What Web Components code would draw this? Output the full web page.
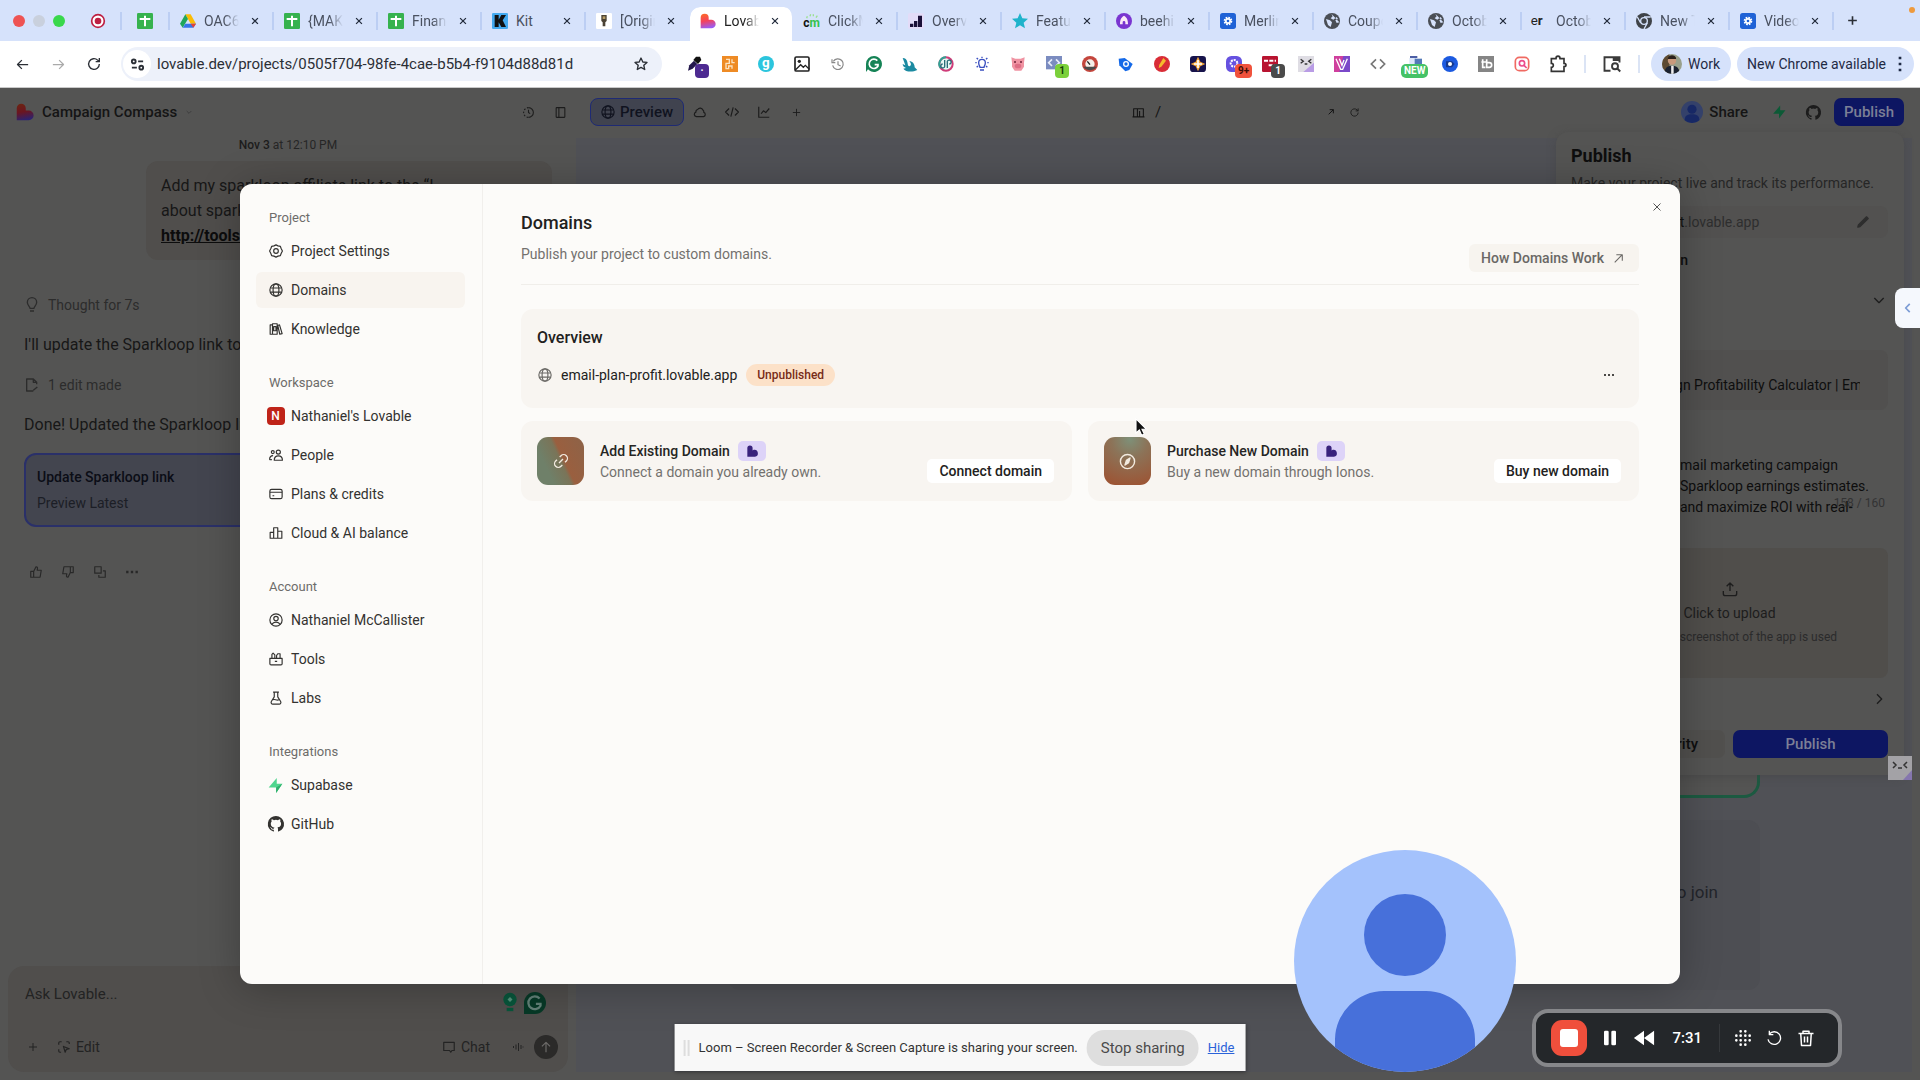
<!DOCTYPE html>
<html lang="en">
<head>
<meta charset="utf-8">
<title>Campaign Compass</title>
<style>
html, body {
  margin: 0;
  height: 100%;
}
body {
  display: grid;
  grid-template-rows: auto 1fr;
  overflow: hidden;
  font-family: Roboto, "Liberation Sans", sans-serif;
  font-size: 14px;
  background: #545453;
}
</style>
</head>
<body>
<browser-chrome></browser-chrome>
<project-page></project-page>

<script>
// line icons, 24 grid, drawn with the current colour
const lineIcons = {
  close: '<path d="M5 5l14 14M19 5L5 19"/>',
  plus: '<path d="M12 4v16M4 12h16"/>',
  back: '<path d="M21 12H4M11 5l-7 7 7 7"/>',
  forward: '<path d="M3 12h17M13 5l7 7-7 7"/>',
  reload: '<path d="M20 12a8 8 0 1 1-2.5-5.8L20 8.500M20 3v5.500h-5.500"/>',
  tune: '<circle cx="6" cy="7" r="3"/><path d="M13 7h8M3 17h8"/><circle cx="18" cy="17" r="3"/>',
  star: '<path d="M12 3l2.700 6 6.300.6-4.800 4.300 1.400 6.400L12 17l-5.600 3.300 1.400-6.400L3 9.600 9.300 9z"/>',
  chevronDown: '<path d="M5 9l7 7 7-7"/>',
  chevronRight: '<path d="M9 5l7 7-7 7"/>',
  chevronLeft: '<path d="M15 5l-7 7 7 7"/>',
  history: '<path d="M12 3a9 9 0 0 1 0 18"/><path d="M12 3a9 9 0 0 0 0 18" stroke-dasharray="3 3"/><path d="M12 7v5l3 2"/>',
  panel: '<rect x="4" y="3" width="16" height="18" rx="1"/><path d="M9 3v18"/>',
  globe: '<circle cx="12" cy="12" r="10.500"/><ellipse cx="12" cy="12" rx="5" ry="10.500"/><path d="M3 8.500h18M3 15.500h18"/>',
  cloud: '<path d="M6 20a4 4 0 0 1-1-7.800 4 4 0 0 1 3-4.500 5 5 0 0 1 9 1 4 4 0 0 1 1.500 4A3.800 3.800 0 0 1 18 20z"/>',
  code: '<path d="M7 6l-6 6 6 6M17 6l6 6-6 6M14 4l-4 16"/>',
  chart: '<path d="M3 3v18h18M7 15l4-5 4 3 6-7"/>',
  device: '<path d="M1 20h9V5H3v15M10 5h11v15h-8M14 20V9M8 20h15"/>',
  arrowOut: '<path d="M5 19L19 5M8 5h11v11"/>',
  gear: '<path d="M12 1.500l3.500 1.700 4 .8 1.300 3.800L23 12l-2.200 4.200-1.300 3.800-4 .8-3.500 1.700-3.500-1.700-4-.8-1.300-3.800L1 12l2.200-4.200L4.500 4l4-.8z"/><circle cx="12" cy="12" r="4"/>',
  books: '<path d="M2 5h4v16H2zM6 3h8v18H6zM8 8h4v7H8zM15 6l3-1 4.500 15-4 1z"/>',
  people: '<circle cx="6.500" cy="7" r="2.500"/><circle cx="16" cy="7" r="3.500"/><path d="M9 21c0-5 3-7.500 7-7.500s7 2.500 7 7.500zM1 20c0-4 2-7 6-7"/><path d="M1 20h4"/>',
  card: '<rect x="1.500" y="4" width="21" height="16" rx="3"/><path d="M1.500 9h21M6 15h3"/>',
  bars: '<path d="M2 21V11h6v10zM8 21V3h7v18zM15 21V9h7v12z"/>',
  user: '<circle cx="12" cy="12" r="10.500"/><circle cx="12" cy="9.500" r="3.800"/><path d="M5 19.500c1.500-3 4-4 7-4s5.500 1 7 4"/>',
  toolbox: '<path d="M1.500 11h21v9a2 2 0 0 1-2 2h-17a2 2 0 0 1-2-2zM5 11V4l2-2 3 3v6M13 11V6l2-3h4v8M10 16h4"/>',
  flask: '<path d="M7 2h10M9 2v8l-5 8a3 3 0 0 0 2.500 4.500h11A3 3 0 0 0 20 18l-5-8V2M7 15c3-2 6 2 10 0"/>',
  link: '<path d="M10 6l2-2a5.600 5.600 0 0 1 8 8l-2 2M14 18l-2 2a5.600 5.600 0 0 1-8-8l2-2M9 15l6-6"/>',
  compass: '<circle cx="12" cy="12" r="10"/><path d="M15.500 7l-2 6.500-5 3.500 2-6.500z" fill="currentColor"/>',
  bulb: '<path d="M9 17c0-3-4-4-4-9a7 7 0 0 1 14 0c0 5-4 6-4 9zM9 21h6"/>',
  edit: '<path d="M14 21H4V3h10l5 5v3M14 3v5h5M14 20l6-5"/>',
  thumbUp: '<path d="M3 11h5v10H3zM8 11l4-8c3 0 3 2 2 6h7l-2 12H8"/>',
  thumbDown: '<path d="M21 13h-5V3h5zM16 13l-4 8c-3 0-3-2-2-6H3L5 3h11"/>',
  copy: '<path d="M3 3h11v11H3zM10 17v4h11V10h-4"/>',
  pencil: '<path d="M3 21l4-1L21 6l-3-3L4 17z" fill="currentColor"/>',
  upload: '<path d="M12 15V3M7 8l5-5 5 5M2 15v4c0 2 1 3 3 3h14c2 0 3-1 3-3v-4"/>',
  select: '<path d="M8 3H5a2 2 0 0 0-2 2v3M16 3h3a2 2 0 0 1 2 2v2M3 16v3a2 2 0 0 0 2 2h2M11 11l10 4-5 1-2 5z"/>',
  chat: '<path d="M3 4h18v14h-4l-2 3-2-3H3z"/>',
  wave: '<path d="M3 10v4M8 7v10M13 4v16M18 8v8M22 11v2"/>',
  arrowUp: '<path d="M12 21V4M5 11l7-7 7 7"/>',
  undo: '<path d="M5 6a9.500 9.500 0 1 1-2 8M5 1v6h6"/>',
  trash: '<path d="M2 6h20M8 6V3h8v3M5 6l1 16h12l1-16M10 10v8M14 10v8"/>',
  // a lattice of round dots
  gridDots: '<path stroke-linecap="round" d="M8.500 2v.01M15.500 2v.01M2 8.500v.01M8.500 8.500v.01M15.500 8.500v.01M22 8.500v.01M2 15.500v.01M8.500 15.500v.01M15.500 15.500v.01M22 15.500v.01M8.500 22v.01M15.500 22v.01"/>'
};

// filled and coloured marks, on a 24 grid too
const marks = {
  record: '<circle cx="12" cy="12" r="9.500" fill="#fff" stroke="#bd1f42" stroke-width="2.500"/><circle cx="12" cy="12" r="5" fill="#bd1f42"/>',
  sheets: '<rect width="24" height="24" rx="2" fill="#36b24e"/><path d="M12 4v16M4 9h16" stroke="#fff" stroke-width="3"/>',
  drive: '<path d="M8 2h8l8 14h-8z" fill="#fbbc05"/><path d="M8 2l4 7-8 13-4-6z" fill="#20a65a"/><path d="M8 16h16l-4 6H4z" fill="#3775e8"/><path d="M16 16h8l-4 6z" fill="#e84335"/>',
  kit: '<rect width="24" height="24" rx="2" fill="#43a9ef"/><path d="M4 3h6v7l4-7h7l-5 8 5 10h-7l-4-7v7H4z" fill="#111"/>',
  lamp: '<rect width="24" height="24" rx="2" fill="#fff"/><path d="M8 3h8v9l-2 2v6h-4v-6l-2-2z" fill="#4a4234"/><path d="M10 5h4v4h-4z" fill="#b59c66"/>',
  cm: '<path d="M4 8l1-3M9 5l1-3M14 5V2M18 7l2-3" stroke="#9be08f" stroke-width="2"/><text x="-1" y="21" font-size="18" font-weight="700" fill="#111">c<tspan fill="#35c24d">m</tspan></text>',
  overview: '<rect width="24" height="24" rx="3" fill="#e3dcf8"/><path d="M3 16h5v5H3zM9 12h5v9H9zM15 4h6v17h-6z" fill="#1b1038"/>',
  featured: '<path d="M12 0l3.500 8 8.500.8-6.500 5.700 2 8.500-7.500-4.500L4.500 23l2-8.500L0 8.800 8.500 8z" fill="#1fb3cb"/>',
  beehive: '<circle cx="12" cy="12" r="12" fill="#7a35d0"/><path d="M12 4c5 3 6 7 6 13h-4v-3a2 2 0 0 0-4 0v3H6c0-6 1-10 6-13z" fill="#fbe9f7"/>',
  blueDoc: '<rect width="24" height="24" rx="4" fill="#1f62d6"/><circle cx="12" cy="12" r="5" fill="none" stroke="#fff" stroke-width="3" stroke-dasharray="2.500 1.400"/><circle cx="12" cy="12" r="4.500" fill="#fff"/><circle cx="12" cy="12" r="2" fill="#1f62d6"/>',
  world: '<circle cx="12" cy="12" r="12" fill="#4a4e55"/><path d="M3 9l6 2 3 3-2 7-4-3zM11 1l2 4-3 3 4 2 5-4 2 3-4 2 2 4 4-1" fill="#d6e2fb"/>',
  er: '<text x="-2" y="18" font-size="20" fill="#222">e<tspan font-weight="700">r</tspan></text>',
  chromeMark: '<circle cx="12" cy="12" r="12" fill="#3f4348"/><circle cx="12" cy="12" r="5" fill="#3f4348" stroke="#d6e2fb" stroke-width="2"/><path d="M12 6h10M7 15L2 6M17 15l-5 9" stroke="#d6e2fb" stroke-width="2"/>',
  heart: '<defs><linearGradient id="h" x1=".2" y1="0" x2=".4" y2="1"><stop stop-color="#fd6a27"/><stop offset=".5" stop-color="#f4425c"/><stop offset="1" stop-color="#9a5cf5"/></linearGradient></defs><path d="M1 23V7a6 6 0 0 1 12 0v3h4a6.500 6.500 0 0 1 0 13z" fill="url(#h)"/>',
  heartDim: '<defs><linearGradient id="h" x1=".2" y1="0" x2=".4" y2="1"><stop stop-color="#6b2412"/><stop offset=".5" stop-color="#6b1520"/><stop offset="1" stop-color="#2c2270"/></linearGradient></defs><path d="M1 23V7a6 6 0 0 1 12 0v3h4a6.500 6.500 0 0 1 0 13z" fill="url(#h)"/>',
  heartPlan: '<path d="M4 22V7a4.500 4.500 0 0 1 9 0v4l2-1a5.500 5.500 0 0 1 2 12z" fill="#38227c"/>',
  supabase: '<path d="M14 0v9h9L13 24v-9H1z" fill="#4fd68e"/><path d="M13 15l10-6L13 24z" fill="#2fae6b"/>',
  supabaseDim: '<path d="M14 1v8h9L12 23v-8H2z" fill="#0c5a36"/>',
  github: '<path fill="currentColor" d="M12 0a12 12 0 0 0-4 23.400c.6.100.8-.3.800-.6v-2.200c-3.300.7-4-1.400-4-1.400-.6-1.400-1.400-1.800-1.400-1.800-1-.7.100-.7.100-.7 1.200 0 1.900 1.200 1.900 1.200 1 1.900 2.900 1.300 3.500 1 .1-.8.400-1.300.8-1.600-2.700-.3-5.500-1.300-5.500-6 0-1.200.5-2.300 1.300-3.100-.2-.4-.6-1.600 0-3.200 0 0 1-.3 3.400 1.200a11.500 11.500 0 0 1 6 0c2.300-1.500 3.300-1.200 3.300-1.200.7 1.600.2 2.800.1 3.200.8.800 1.300 1.900 1.300 3.200 0 4.600-2.800 5.600-5.500 5.900.5.400.9 1 .9 2.200v3.300c0 .3.100.7.800.6A12 12 0 0 0 12 0z"/>',
  dots: '<path fill="currentColor" d="M2 10h4v4H2zM10 10h4v4h-4zM18 10h4v4h-4z"/>',
  avatarDim: '<circle cx="12" cy="12" r="12" fill="#34416a"/><circle cx="12" cy="9" r="5" fill="#172865"/><path d="M4 21c0-5 3-6.500 8-6.500s8 1.500 8 6.500a12 12 0 0 1-16 0z" fill="#172865"/>',
  // extensions
  picker: '<path d="M3 22l2-8 7-7 5 5-7 7z" fill="#24184d"/><path d="M11 6l4-5h6l2 5-5 6z" fill="#111"/>',
  orange: '<rect width="24" height="24" fill="#ee8b25"/><path d="M6 5h5v6H6v8h4v-4h5v4M15 5v5h4" stroke="#fbe3c2" stroke-width="2" fill="none"/>',
  gCyan: '<circle cx="12" cy="12" r="12" fill="#2cc5dd"/><text x="6" y="17" font-size="20" font-weight="700" fill="#fff">g</text>',
  image: '<rect x="1.500" y="1.500" width="21" height="21" rx="2" fill="none" stroke="#222" stroke-width="2.500"/><path d="M2 21l8-8 4 4 3-3 6 6" fill="none" stroke="#222" stroke-width="2"/><circle cx="8" cy="8" r="2.500" fill="#222"/>',
  clock: '<path d="M5 8a8 8 0 1 1-1 6M3 5v5h5M12 8v5l4 2" fill="none" stroke="#888" stroke-width="1.800"/>',
  grammarly: '<path d="M12 0a12 12 0 1 1-9 20L0 24V12A12 12 0 0 1 12 0z" fill="#158356"/><path d="M17 7a7 7 0 1 0 1 8v-2h-5" fill="none" stroke="#fff" stroke-width="2.500"/>',
  grammarlyDim: '<path d="M12 0a12 12 0 1 1 0 24H0V12A12 12 0 0 1 12 0z" fill="#073927"/><path d="M17 7a7 7 0 1 0 1 8v-2h-5" fill="none" stroke="#638178" stroke-width="2.500"/>',
  tipDim: '<circle cx="12" cy="9" r="8" fill="#08563b"/><path d="M9 9l3-3 3 3-3 3z" fill="#54907a"/><path d="M8 19h8v4H8z" fill="#08563b"/>',
  squid: '<path d="M1 3c4 0 6 2 7 6l1 5c1 2 3 2 4 0s0-4-2-6c5 0 8 4 8 9l4 4-5 2c-8 1-13 0-16-4l4-1c-3-1-5-3-5-6l4 2z" fill="#1b8aa1"/>',
  ring: '<circle cx="12" cy="12" r="10" fill="#e9f7f4" stroke="#cf3c79" stroke-width="3"/><path d="M12 2a10 10 0 0 0-8 16" fill="none" stroke="#2fa494" stroke-width="3"/><path d="M10 6v8a3 3 0 1 1-3-2M14 18v-8a3 3 0 1 1 3 2" fill="none" stroke="#2a6b78" stroke-width="2"/>',
  idea: '<path d="M9 17c0-2-2-3-2-7a5 5 0 0 1 10 0c0 4-2 5-2 7zM9 21h6M12 1v2M2 10h2M20 10h2M4 3l2 2M20 3l-2 2M4 17l2-2M20 17l-2-2" fill="none" stroke="#3a4fc0" stroke-width="2"/>',
  pig: '<path d="M2 2l6 2h8l6-2-1 8v6l-4 6H7l-4-6v-6z" fill="#f093a2"/><ellipse cx="12" cy="15" rx="5" ry="3.500" fill="#dd6d84"/><path d="M6 9h3M15 9h3" stroke="#6e2338" stroke-width="2"/>',
  codeBlue: '<rect width="24" height="20" fill="#7b8cc0"/><path d="M9 5l-5 5 5 5M15 5l5 5-5 5" fill="none" stroke="#e9edfa" stroke-width="2.500"/>',
  gauge: '<circle cx="12" cy="12" r="12" fill="#c4463d"/><circle cx="12" cy="12" r="7" fill="#f5efe9"/><path d="M2 16h20a12 12 0 0 1-20 0z" fill="#4b4b4b"/><path d="M12 13L8 8" stroke="#222" stroke-width="2"/>',
  tag: '<path d="M1 4l9-1 12 9-5 9-6 2L2 14z" fill="#1469e8"/><circle cx="12" cy="12" r="3.500" fill="#1469e8" stroke="#fff" stroke-width="2"/>',
  redPen: '<circle cx="12" cy="12" r="12" fill="#d92c36"/><path d="M14 3l4 4-7 9-4 2 1-5z" fill="#f5b92c"/>',
  starNavy: '<rect width="24" height="24" rx="5" fill="#17134b"/><path d="M12 1l3.500 7.500L23 12l-7.500 3.500L12 23l-3.500-7.500L1 12l7.500-3.500z" fill="#f2a73b"/><path d="M12 6v12M6 12h12" stroke="#fff" stroke-width="2.500"/>',
  violet: '<rect width="24" height="24" rx="8" fill="#6651e0"/><circle cx="12" cy="11" r="5" fill="none" stroke="#fff" stroke-width="3" stroke-dasharray="3 1.500"/>',
  redBox: '<rect width="24" height="24" rx="2" fill="#b81330"/><path d="M3 7h18M10 14h11" stroke="#fff" stroke-width="3" stroke-dasharray="6 2"/>',
  face: '<rect width="24" height="24" fill="#dfdde4"/><path d="M24 10v14H8z" fill="#b99ce5"/><path d="M4 5l4 3-4 3M20 5l-4 3 4 3M10 12h4" fill="none" stroke="#333" stroke-width="2"/>',
  facePale: '<rect width="24" height="24" fill="#a3a2a6"/><path d="M24 14v10h-9z" fill="#8576ae"/><path d="M5 6l3 3-3 3M19 6l-3 3 3 3M10 12h4" fill="none" stroke="#333" stroke-width="1.500"/>',
  vBox: '<rect width="24" height="24" fill="#cf3f9d"/><path d="M14 0h10v24H8z" fill="#7a48c9"/><path d="M3 4l7 16h3L20 4M8 4l4 10 3-8" fill="none" stroke="#fff" stroke-width="2"/>',
  angle: '<path d="M9 5l-7 7 7 7M15 5l7 7-7 7" fill="none" stroke="#777" stroke-width="2.500"/>',
  cardNew: '<path d="M6 0h11v3H6z" fill="#4d5fa5"/><path d="M5 3h10v9H5z" fill="#dce6fa"/><path d="M13 4h11v8H13z" fill="#5379b8"/>',
  blueEye: '<circle cx="12" cy="12" r="12" fill="#1c5ae0"/><path d="M6 8h9l4 4-4 5H6z" fill="#15388e"/><circle cx="12" cy="12" r="3" fill="#fff"/>',
  tb: '<rect width="24" height="24" fill="#858585"/><path d="M7 5v12h4M5 9h7M13 5v12h4a3 3 0 0 0 0-7h-4" stroke="#fff" stroke-width="2.500" fill="none"/>',
  searchPink: '<rect x="2" y="2" width="20" height="20" rx="6" fill="none" stroke="#f06a62" stroke-width="2.500"/><circle cx="12" cy="11" r="4" fill="none" stroke="#ec4c8c" stroke-width="2.500"/><path d="M15 14l4 4" stroke="#ec4c8c" stroke-width="2.500"/>',
  puzzle: '<path d="M2 4h7c0-5 6-5 6 0h6v7c4 0 4 5 0 5v7H2v-6c4 0 4-6 0-6z" fill="none" stroke="#333" stroke-width="2.500"/>',
  lens: '<path d="M10 21H2V3h20v7" fill="none" stroke="#3a3a3a" stroke-width="2.500"/><path d="M13 3h9v5h-9z" fill="#3a3a3a"/><circle cx="16" cy="15" r="4" fill="none" stroke="#3a3a3a" stroke-width="2.500"/><path d="M19 18l4 4" stroke="#3a3a3a" stroke-width="2.500"/>',
  portrait: '<defs><clipPath id="c"><circle cx="12" cy="12" r="12"/></clipPath></defs><g clip-path="url(#c)"><path d="M0 0h24v24H0z" fill="#99a08b"/><path d="M0 0h9v24H0z" fill="#5d4a32"/><circle cx="12" cy="8" r="5" fill="#c99a7c"/><path d="M7 6c0-6 10-6 10 0z" fill="#2a211b"/><path d="M3 24c0-9 5-10 9-10s9 1 9 10z" fill="#1b2230"/><path d="M11 14h3v10h-3z" fill="#eee"/></g>',
  more: '<path fill="currentColor" d="M10 1h4v4h-4zM10 10h4v4h-4zM10 19h4v4h-4z"/>',
  pause: '<rect x="3" y="1" width="7" height="22" rx="2" fill="currentColor"/><rect x="14" y="1" width="7" height="22" rx="2" fill="currentColor"/>',
  rewind: '<path d="M12 4v16L1 12zM23 4v16l-11-8z" fill="currentColor"/>',
  pointer: '<path d="M4 1v19l4.500-4 3 7 3.500-1.500-3-6.500h6z" fill="#111" stroke="#fff" stroke-width="1.500"/>'
};

class UiIcon extends HTMLElement {
  constructor() {
    super();
    this.attachShadow({ mode: "open" });
  }

  connectedCallback() {
    const name = this.getAttribute("name");
    const size = this.getAttribute("size") || 16;
    const weight = this.getAttribute("weight") || 2;
    const line = lineIcons[name];
    this.shadowRoot.innerHTML = `
      <style>
        :host { display: inline-flex; flex: none; width: ${size}px; height: ${size}px; }
        svg { width: 100%; height: 100%; overflow: visible; }
      </style>
      <svg viewBox="0 0 24 24" aria-hidden="true" ${line ? `fill="none" stroke="currentColor" stroke-width="${weight}" stroke-linejoin="round"` : ""}>${line || marks[name]}</svg>`;
  }
}
customElements.define("ui-icon", UiIcon);

const base = `
  * { box-sizing: border-box; }
  button, input, textarea { font: inherit; color: inherit; background: none; border: 0; padding: 0; margin: 0; }
  button { display: inline-flex; align-items: center; justify-content: center; white-space: nowrap; }
  a { color: inherit; text-decoration: none; }
  h1, h2, h3, p { margin: 0; font-weight: inherit; font-size: inherit; }
`;

// registers an element whose shadow root is cloned from one template
function define(name, css, html) {
  const template = document.createElement("template");
  template.innerHTML = `<style>${base}${css}</style>${html}`;
  customElements.define(name, class extends HTMLElement {
    constructor() {
      super();
      this.attachShadow({ mode: "open" });
      this.shadowRoot.appendChild(template.content.cloneNode(true));
    }
  });
}

define("browser-tab", `
  :host {
    display: flex;
    box-sizing: border-box;
    flex: 0 1 104px;
    align-items: center;
    gap: 8px;
    height: 18px;
    padding: 0 9px 0 10px;
    min-width: 0;
    color: #4a5160;
    border-right: 2px solid #bccef3;
  }
  :host([plain]) { border-color: transparent; }
  :host([active]) {
    height: 34px;
    padding-bottom: 6px;
    margin-top: 7px;
    background: #fff;
    border-color: transparent;
    background-clip: padding-box;
    border-radius: 10px 10px 0 0;
    color: #222;
  }
  span {
    flex: 1;
    min-width: 0;
    overflow: hidden;
    white-space: nowrap;
    -webkit-mask-image: linear-gradient(90deg, #000 60%, transparent);
    mask-image: linear-gradient(90deg, #000 60%, transparent);
  }
  :host([short]) span { mask-image: none; -webkit-mask-image: none; }
  button { color: #222b3c; width: 16px; }
`, `
  <slot name="icon"></slot>
  <span><slot></slot></span>
  <button aria-label="Close tab"><ui-icon name="close" size="10" weight="3"></ui-icon></button>
`);

const tabs = [
  ["drive", "OAC6"], ["sheets", "{MAKE"], ["sheets", "Financ"], ["kit", "Kit", "short"],
  ["lamp", "[Origin", "plain"], ["heart", "Lovabl", "active"], ["cm", "ClickM"], ["overview", "Overv"],
  ["featured", "Featur"], ["beehive", "beehi"], ["blueDoc", "Merlin"], ["world", "Coupo"],
  ["world", "Octobe"], ["er", "Octobe"], ["chromeMark", "New T"], ["blueDoc", "Video"]
];

const extensions = [
  ["picker", "·", "#4d2a91", "#fff"], ["orange"], ["gCyan"], ["image"], ["clock"], ["grammarly"], ["squid"], ["ring"],
  ["idea"], ["pig"], ["codeBlue", "1", "#7bd03b", "#173d0a"], ["gauge"], ["tag"], ["redPen"], ["starNavy"],
  ["violet", "9+", "#f0523c", "#3c0c05"], ["redBox", "1", "#4a4a4a", "#fff"], ["face"], ["vBox"], ["angle"],
  ["cardNew", "NEW", "#45c266", "#fff"], ["blueEye"], ["tb"], ["searchPink"], ["puzzle"]
];

define("browser-chrome", `
  :host { display: block; background: #fff; color: #2b2f36; border-bottom: 1px solid #c9c9c9; }
  .strip { display: flex; align-items: center; height: 41px; background: #d6e2fb; }
  .lights { display: flex; gap: 8px; padding: 0 25px 0 13px; }
  .lights i { width: 12px; height: 12px; border-radius: 50%; background: #ee5353; }
  .lights i:nth-child(2) { background: #c9d0dd; }
  .lights i:nth-child(3) { background: #39d84b; }
  .pinned { display: flex; align-items: center; justify-content: center; width: 48px; height: 18px; border-right: 2px solid #bccef3; }
  .first { width: 32px; justify-content: flex-start; }
  .new { width: 36px; height: 30px; }
  .dot { align-self: flex-start; margin: 7px 5px 0 auto; width: 6px; height: 6px; border-radius: 50%; background: #ee9a3d; }
  .bar { display: flex; align-items: center; height: 46px; padding: 0 6px 0 4px; background: #fff; border-radius: 8px 8px 0 0; }
  .nav { width: 36px; height: 32px; flex: none; }
  .off { color: #aaa; }
  form { display: flex; flex: 1; align-items: center; gap: 6px; height: 34px; margin: 0 14px 0 9px; padding: 0 13px 0 2px; border-radius: 17px; background: #edf1fa; min-width: 0; }
  .site { width: 28px; height: 28px; border-radius: 50%; background: #fff; flex: none; }
  input { flex: 1; min-width: 0; font-size: 15px; outline: 0; }
  .ext { position: relative; width: 36px; height: 32px; flex: none; }
  .ext b { position: absolute; left: 19px; top: 16px; min-width: 14px; height: 14px; padding: 0 3px; border-radius: 4px; font-size: 10px; line-height: 14px; text-align: center; }
  .ext b.wide { left: 5px; border-radius: 5px; }
  hr { flex: none; width: 2px; height: 18px; margin: 0 8px; border: 0; background: #dbe4f5; }
  .pill { height: 34px; border-radius: 17px; background: #d6e2fb; color: #1f2a44; gap: 6px; padding: 0 11px; margin-left: 3px; flex: none; }
  .pill + .pill { margin-left: 6px; padding: 0 6px 0 10px; }
`, `
  <div class="strip">
    <div class="lights"><i></i><i></i><i></i></div>
    <div class="pinned first"><ui-icon name="record"></ui-icon></div>
    <div class="pinned"><ui-icon name="sheets"></ui-icon></div>
    ${tabs.map(([icon, title, flag = ""]) => `<browser-tab ${flag}><ui-icon slot="icon" name="${icon}"></ui-icon>${title}</browser-tab>`).join("")}
    <button class="new" aria-label="New tab"><ui-icon name="plus" size="13" weight="3"></ui-icon></button>
    <i class="dot"></i>
  </div>
  <div class="bar">
    <button class="nav" aria-label="Back"><ui-icon name="back" size="15" weight="2"></ui-icon></button>
    <button class="nav off" aria-label="Forward"><ui-icon name="forward" size="15" weight="2"></ui-icon></button>
    <button class="nav" aria-label="Reload"><ui-icon name="reload" weight="2"></ui-icon></button>
    <form>
      <button type="button" class="site" aria-label="Site information"><ui-icon name="tune" size="15" weight="3"></ui-icon></button>
      <input aria-label="Address" value="lovable.dev/projects/0505f704-98fe-4cae-b5b4-f9104d88d81d">
      <button type="button" aria-label="Bookmark"><ui-icon name="star"></ui-icon></button>
    </form>
    ${extensions.map(([icon, badge, bg, fg]) => `<button class="ext" aria-label="${icon}"><ui-icon name="${icon}"></ui-icon>${badge ? `<b class="${badge.length > 2 ? "wide" : ""}" style="background:${bg};color:${fg}">${badge}</b>` : ""}</button>`).join("")}
    <hr>
    <button class="ext" aria-label="Search tabs"><ui-icon name="lens" size="18"></ui-icon></button>
    <hr>
    <button class="pill"><ui-icon name="portrait" size="20"></ui-icon>Work</button>
    <button class="pill">New Chrome available<ui-icon name="more"></ui-icon></button>
  </div>
`);

define("project-header", `
  :host { display: flex; height: 48px; color: #151515; }
  .name { display: flex; align-items: center; width: 30%; padding-left: 16px; font-size: 15px; font-weight: 500; }
  .name > ui-icon:first-child { margin-right: 8px; }
  .name .down { margin-left: 8px; color: #333; }
  .fill { flex: 1; }
  .tool { width: 32px; height: 28px; color: #1c1c1c; }
  .views { flex: 1; display: grid; grid-template-columns: 1fr 246px 1fr; align-items: center; padding: 0 16px 0 14px; }
  .group { display: flex; align-items: center; }
  .preview { height: 28px; padding: 0 10px; gap: 5px; border: 1px solid #1e2a74; border-radius: 8px; background: #40434f; color: #10131f; font-size: 15px; font-weight: 500; }
  .route { display: flex; align-items: center; gap: 10px; padding: 0 7px 0 8px; font-size: 15px; }
  .route .tool { width: 18px; }
  .end { justify-content: flex-end; }
  .share { gap: 6px; font-size: 15px; font-weight: 500; margin-right: 14px; }
  .publish { width: 70px; height: 28px; margin-left: 4px; border-radius: 7px; background: #0d1662; color: #7c7f96; font-size: 15px; font-weight: 500; }
  .end .tool { width: 34px; }
`, `
  <div class="name">
    <ui-icon name="heartDim" size="18"></ui-icon>Campaign Compass
    <ui-icon class="down" name="chevronDown" size="8"></ui-icon>
    <span class="fill"></span>
    <button class="tool" aria-label="History"><ui-icon name="history" size="13"></ui-icon></button>
    <button class="tool" aria-label="Toggle chat"><ui-icon name="panel" size="13"></ui-icon></button>
  </div>
  <div class="views">
    <div class="group">
      <button class="preview"><ui-icon name="globe" size="14"></ui-icon>Preview</button>
      <button class="tool" aria-label="Cloud"><ui-icon name="cloud" size="14"></ui-icon></button>
      <button class="tool" aria-label="Code"><ui-icon name="code" size="14"></ui-icon></button>
      <button class="tool" aria-label="Analytics"><ui-icon name="chart" size="14"></ui-icon></button>
      <button class="tool" aria-label="More views"><ui-icon name="plus" size="11"></ui-icon></button>
    </div>
    <div class="route">
      <ui-icon name="device" size="13"></ui-icon><span>/</span><span class="fill"></span>
      <button aria-label="Open"><ui-icon name="arrowOut" size="8" weight="3"></ui-icon></button>
      <button class="tool" aria-label="Refresh"><ui-icon name="reload" size="11"></ui-icon></button>
    </div>
    <div class="group end">
      <button class="share"><ui-icon name="avatarDim" size="22"></ui-icon>Share</button>
      <button class="tool" aria-label="Supabase"><ui-icon name="supabaseDim" size="14"></ui-icon></button>
      <button class="tool" aria-label="GitHub"><ui-icon name="github" size="15"></ui-icon></button>
      <button class="publish">Publish</button>
    </div>
  </div>
`);

define("chat-panel", `
  :host { display: flex; flex-direction: column; flex: none; width: 30%; color: #171717; line-height: 24px; }
  .log { display: flex; flex-direction: column; gap: 16px; padding: 0 24px; white-space: nowrap; }
  .date { font-size: 12px; line-height: 18px; text-align: center; color: #262626; }
  .date b { font-weight: 500; color: #1c1c1c; }
  p { font-size: 16px; }
  .bubble { margin: -9px 0 17px 122px; padding: 12px 15px; border-radius: 12px; background: #504e4c; line-height: 25px; }
  .bubble a { font-weight: 700; text-decoration: underline; color: #0c0c0c; }
  .note { display: flex; align-items: center; gap: 8px; color: #2c2c2c; }
  .version { padding: 10px 11px; border: 2px solid #2a3069; border-radius: 12px; background: #43454f; color: #1c1e26; }
  .version b { display: block; font-weight: 500; color: #0b0d16; margin-bottom: 2px; }
  .actions { display: flex; gap: 18px; padding: 22px 5px; color: #282828; }
  form { display: flex; flex-direction: column; margin: auto 8px 8px; padding: 16px 10px 12px 17px; border-radius: 16px; background: #504e4c; }
  textarea { display: block; height: 44px; flex: 1; resize: none; font-size: 15px; line-height: 24px; outline: 0; }
  textarea::placeholder { color: #232323; opacity: 1; }
  .write { display: flex; }
  .helpers { display: flex; align-items: flex-start; gap: 4px; padding: 10px 12px 0 0; }
  .row { display: flex; align-items: center; justify-content: space-between; height: 26px; margin-top: 8px; padding-left: 2px; color: #232323; }
  .row div { display: flex; align-items: center; gap: 18px; }
  .row .right { gap: 10px; }
  .row button { gap: 5px; }
  .row .chat { margin-right: 12px; }
  .row .send { width: 24px; height: 24px; border-radius: 50%; background: #2b2a29; color: #6d6b69; }
`, `
  <div class="log">
    <div class="date"><b>Nov 3</b> at 12:10 PM</div>
    <p class="bubble">Add my sparkloop affiliate link to the “I<br>about spark<br><a href="#">http://tools</a></p>
    <div class="note"><ui-icon name="bulb"></ui-icon>Thought for 7s</div>
    <p>I'll update the Sparkloop link to</p>
    <div class="note"><ui-icon name="edit"></ui-icon>1 edit made</div>
    <p>Done! Updated the Sparkloop li</p>
    <div class="version"><b>Update Sparkloop link</b>Preview Latest</div>
    <div class="actions">
      <button aria-label="Good"><ui-icon name="thumbUp" size="14"></ui-icon></button>
      <button aria-label="Bad"><ui-icon name="thumbDown" size="14"></ui-icon></button>
      <button aria-label="Copy"><ui-icon name="copy" size="14"></ui-icon></button>
      <button aria-label="More"><ui-icon name="dots" size="14"></ui-icon></button>
    </div>
  </div>
  <form>
    <div class="write">
      <textarea aria-label="Message" placeholder="Ask Lovable..."></textarea>
      <div class="helpers"><ui-icon name="tipDim" size="20"></ui-icon><ui-icon name="grammarlyDim" size="22"></ui-icon></div>
    </div>
    <div class="row">
      <div>
        <button type="button" aria-label="Attach"><ui-icon name="plus" size="12"></ui-icon></button>
        <button type="button"><ui-icon name="select" size="14"></ui-icon>Edit</button>
      </div>
      <div class="right">
        <button type="button" class="chat"><ui-icon name="chat" size="14"></ui-icon>Chat</button>
        <button type="button" aria-label="Voice"><ui-icon name="wave" size="12"></ui-icon></button>
        <button type="button" class="send" aria-label="Send"><ui-icon name="arrowUp" size="14"></ui-icon></button>
      </div>
    </div>
  </form>
`);

define("app-preview", `
  :host { display: flex; flex: 1; flex-direction: column; gap: 22px; padding: 60px 152px 82px; margin: 2px 8px 8px 0; background: #505156; color: #23252b; font-size: 17px; }
  .result { flex: 1; border: 3px solid #1c5a41; border-top: 0; border-radius: 0 0 16px 16px; background: #545453; }
  .join { height: 170px; padding: 62px 42px; border-radius: 12px; background: #4d4e53; text-align: right; }
`, `
  <div class="result"></div>
  <div class="join">to join</div>
`);

define("publish-panel", `
  :host { display: flex; flex-direction: column; width: 348px; box-sizing: border-box; padding: 12px 16px 17px 15px; border-radius: 12px; background: #545453; color: #0e0e0e; box-shadow: 0 2px 8px #4448; line-height: 24px; }
  h2 { font-size: 18px; font-weight: 700; }
  .lead { color: #262626; margin-top: 4px; line-height: 22px; white-space: nowrap; }
  .domain { display: flex; align-items: center; justify-content: space-between; height: 32px; margin-top: 12px; padding: 0 18px 0 12px; border-radius: 8px; background: #525150; color: #2e2e2e; }
  .domain b { font-weight: 400; color: #111; }
  .custom { align-self: flex-start; justify-content: flex-end; width: 117px; height: 24px; margin-top: 10px; font-weight: 500; }
  .down { align-self: flex-end; margin: 20px 1px 42px 0; color: #1d1d1d; }
  input { height: 60px; width: 289px; padding: 10px 0 0 18px; outline: 0; }
  .title { background: #51504f; border-radius: 8px; }
  .about { position: relative; display: block; margin-top: 45px; }
  textarea { display: block; width: 100%; height: 84px; padding: 0 0 0 109px; line-height: 21px; resize: none; outline: 0; overflow: hidden; }
  .count { position: absolute; right: 3px; top: 36px; font-size: 12px; color: #333; }
  .upload { display: flex; flex-direction: column; align-items: center; justify-content: flex-start; height: 130px; margin-top: 9px; padding-top: 33px; border-radius: 8px; background: #504e4b; color: #1d1d1d; }
  .upload ui-icon { margin-bottom: 4px; }
  .upload small { font-size: 12px; line-height: 24px; color: #2b2b2b; white-space: nowrap; }
  .next { align-self: flex-end; margin: 13px 1px 23px 0; color: #1d1d1d; }
  .buttons { display: grid; grid-template-columns: 1fr 155px; gap: 8px; height: 28px; font-weight: 500; font-size: 15px; }
  .buttons button:first-child { justify-content: flex-end; padding-right: 27px; background: #51504e; border-radius: 7px; }
  .publish { border-radius: 7px; background: #0d1662; color: #7c7f96; }
`, `
  <h2>Publish</h2>
  <p class="lead">Make your project live and track its performance.</p>
  <div class="domain"><span><b>email-plan-profit</b>.lovable.app</span><ui-icon name="pencil" size="14"></ui-icon></div>
  <button class="custom">n</button>
  <ui-icon class="down" name="chevronDown"></ui-icon>
  <div class="title"><input aria-label="Title" value="Email Campaign Profitability Calculator | Em"></div>
  <div class="about">
    <textarea aria-label="Description">mail marketing campaign
Sparkloop earnings estimates.
and maximize ROI with real-</textarea>
    <span class="count">158 / 160</span>
  </div>
  <button class="upload"><ui-icon name="upload"></ui-icon><span>Click to upload</span><small>If empty, a screenshot of the app is used</small></button>
  <ui-icon class="next" name="chevronRight"></ui-icon>
  <div class="buttons"><button>Review security</button><button class="publish">Publish</button></div>
`);

define("nav-group", `
  :host { display: flex; flex-direction: column; gap: 3px; }
  h3 { margin: 0 13px -3px; font-size: 13px; line-height: 30px; color: #6d6c6a; }
`, `<h3><slot name="label"></slot></h3><slot></slot>`);

define("nav-item", `
  :host { display: block; }
  a { display: flex; align-items: center; gap: 8px; height: 36px; padding: 0 12px; border-radius: 6px; color: #333230; }
  :host([current]) a { background: #f8f4ef; }
  .icon { display: flex; justify-content: center; width: 15px; }
`, `<a href="#"><span class="icon"><slot name="icon"></slot></span><slot></slot></a>`);

const item = (icon, text, flag = "", size = 14) =>
  `<nav-item ${flag}><ui-icon slot="icon" name="${icon}" size="${size}"></ui-icon>${text}</nav-item>`;

define("domain-card", `
  :host { display: flex; align-items: center; gap: 16px; height: 80px; padding: 0 18px 0 16px; box-sizing: border-box; border-radius: 12px; background: #f8f5f1; white-space: nowrap; }
  .tile { display: flex; align-items: center; justify-content: center; width: 47px; height: 48px; border-radius: 11px; color: #f3ebe0; background: var(--tile); }
  .text { flex: 1; color: #73716e; line-height: 20px; }
  h3 { display: flex; align-items: center; gap: 8px; height: 22px; font-weight: 500; color: #262524; }
  .plan { display: flex; align-items: center; justify-content: center; width: 28px; height: 20px; border-radius: 5px; background: #ddd3f8; }
  button { align-self: flex-end; height: 24px; margin-bottom: 18px; padding: 0 12px; border-radius: 5px; background: #fff; color: #222120; font-weight: 500; }
`, `
  <div class="tile"><slot name="icon"></slot></div>
  <div class="text">
    <h3><slot name="title"></slot><span class="plan"><ui-icon name="heartPlan" size="14"></ui-icon></span></h3>
    <slot></slot>
  </div>
  <button><slot name="action"></slot></button>
`);

define("settings-dialog", `
  :host { display: grid; grid-template-columns: 243px 1fr; width: 75%; height: calc(100% - 192px); border-radius: 12px; overflow: hidden; background: #fcfbf9; color: #222120; box-shadow: 0 4px 40px #0004; }
  nav { display: flex; flex-direction: column; gap: 21px; padding: 19px 17px 0 16px; border-right: 1px solid #f1efec; }
  .letter { display: flex; align-items: center; justify-content: center; flex: none; width: 18px; height: 18px; border-radius: 4px; background: #bf2419; color: #fff; font-size: 12px; font-weight: 500; }
  main { display: flex; flex-direction: column; padding: 10px 41px 0 38px; }
  .close { align-self: flex-end; width: 26px; height: 26px; margin-right: -31px; color: #555; }
  header { display: flex; justify-content: space-between; align-items: flex-end; margin-top: -9px; padding-bottom: 12px; border-bottom: 1px solid #f0eeea; }
  h1 { font-size: 18px; font-weight: 500; line-height: 24px; }
  header p { margin: 8px 0 7px; line-height: 22px; color: #73716e; }
  .how { display: flex; align-items: center; gap: 8px; height: 28px; padding: 0 14px 0 12px; border-radius: 6px; background: #f7f4ef; color: #6a6865; font-weight: 500; }
  .overview { margin-top: 24px; padding: 16px; border-radius: 12px; background: #f8f5f1; }
  h2 { font-size: 16px; font-weight: 500; line-height: 26px; }
  .domain { display: flex; align-items: center; gap: 9px; height: 22px; margin: 13px 0 6px; padding-left: 1px; }
  .domain > ui-icon { color: #6b6966; }
  .state { padding: 0 11px; border-radius: 11px; background: #fce1c8; color: #772c18; font-size: 12px; line-height: 22px; font-weight: 500; }
  .domain button { margin-left: auto; width: 28px; color: #4a4846; }
  .cards { display: grid; grid-template-columns: 1fr 1fr; gap: 16px; margin-top: 13px; }
`, `
  <nav>
    <nav-group><span slot="label">Project</span>
      ${item("gear", "Project Settings")}${item("globe", "Domains", "current")}${item("books", "Knowledge")}
    </nav-group>
    <nav-group><span slot="label">Workspace</span>
      <nav-item><span slot="icon" class="letter">N</span>Nathaniel's Lovable</nav-item>
      ${item("people", "People")}${item("card", "Plans &amp; credits")}${item("bars", "Cloud &amp; AI balance")}
    </nav-group>
    <nav-group><span slot="label">Account</span>
      ${item("user", "Nathaniel McCallister")}${item("toolbox", "Tools")}${item("flask", "Labs")}
    </nav-group>
    <nav-group><span slot="label">Integrations</span>
      ${item("supabase", "Supabase", "", 15)}${item("github", "GitHub", "", 16)}
    </nav-group>
  </nav>
  <main>
    <button class="close" aria-label="Close"><ui-icon name="close" size="12"></ui-icon></button>
    <header>
      <div><h1>Domains</h1><p>Publish your project to custom domains.</p></div>
      <a class="how" href="#">How Domains Work<ui-icon name="arrowOut" size="13"></ui-icon></a>
    </header>
    <section class="overview">
      <h2>Overview</h2>
      <div class="domain"><ui-icon name="globe" size="14"></ui-icon>email-plan-profit.lovable.app<span class="state">Unpublished</span><button aria-label="More"><ui-icon name="dots" size="12"></ui-icon></button></div>
    </section>
    <div class="cards">
      <domain-card style="--tile: linear-gradient(65deg, #6f8069 0 25%, #7a7458 50%, #9a5f3f 56%, #8d6348)">
        <ui-icon slot="icon" name="link"></ui-icon><span slot="title">Add Existing Domain</span>Connect a domain you already own.<span slot="action">Connect domain</span>
      </domain-card>
      <domain-card style="--tile: radial-gradient(circle at 55% 5%, #7e9078, #8c7358 35%, #9c5535 90%)">
        <ui-icon slot="icon" name="compass" size="17"></ui-icon><span slot="title">Purchase New Domain</span>Buy a new domain through Ionos.<span slot="action">Buy new domain</span>
      </domain-card>
    </div>
  </main>
`);

define("share-bar", `
  :host { display: flex; align-items: center; gap: 9px; box-sizing: border-box; height: 47px; padding: 0 11px 0 9px; background: #f8f8f8; color: #333; font-size: 13px; white-space: nowrap; box-shadow: 0 1px 4px #0006; }
  i { width: 6px; height: 16px; border: solid #ddd; border-width: 0 2px; }
  button { height: 36px; padding: 0 14px; border-radius: 18px; background: #dedede; color: #4a4a4a; font-size: 15px; }
  a { color: #2b63d9; text-decoration: underline; }
`, `<i></i><span>Loom – Screen Recorder &amp; Screen Capture is sharing your screen.</span><button>Stop sharing</button><a href="#">Hide</a>`);

define("camera-bubble", `
  :host { display: block; width: 222px; height: 222px; }
  svg { display: block; }
`, `
  <svg viewBox="0 0 222 222" role="img" aria-label="Camera">
    <defs><clipPath id="round"><circle cx="111" cy="111" r="111"/></clipPath></defs>
    <g clip-path="url(#round)">
      <path d="M0 0h222v222H0z" fill="#a4c2fc"/>
      <circle cx="111" cy="85" r="41" fill="#4770da"/>
      <path d="M41 222v-33a49 49 0 0 1 49-48h42a49 49 0 0 1 49 48v33z" fill="#4770da"/>
    </g>
  </svg>
`);

define("recorder-controls", `
  :host { display: flex; align-items: center; gap: 15px; box-sizing: border-box; height: 58px; padding: 0 23px 0 15px; border: 4px solid #86878a; border-radius: 16px; background: #24272a; color: #fff; font-size: 15px; font-weight: 500; }
  .stop { width: 36px; height: 36px; border-radius: 11px; background: #f04f3c; }
  .stop i { width: 18px; height: 18px; border-radius: 3px; background: #fff; }
  hr { width: 1px; height: 28px; margin: 0; border: 0; background: #35383b; }
  time { padding: 0 2px; }
`, `
  <button class="stop" aria-label="Stop"><i></i></button>
  <button aria-label="Pause"><ui-icon name="pause"></ui-icon></button>
  <button aria-label="Rewind"><ui-icon name="rewind" size="22"></ui-icon></button>
  <time>7:31</time>
  <hr>
  <button aria-label="Blur"><ui-icon name="gridDots" weight="4"></ui-icon></button>
  <button aria-label="Restart"><ui-icon name="undo"></ui-icon></button>
  <button aria-label="Delete"><ui-icon name="trash" size="18"></ui-icon></button>
`);

// the whole page, with the things that float over it
define("project-page", `
  :host { position: relative; display: grid; grid-template-rows: auto 1fr; min-height: 0; }
  .split { display: flex; min-height: 0; }
  publish-panel { position: absolute; top: 44px; right: 16px; }
  .layer { position: absolute; inset: 0; display: flex; align-items: center; justify-content: center; }
  .edge { position: absolute; right: 0; top: 200px; width: 25px; height: 40px; border-radius: 8px 0 0 8px; background: #f5f8fd; color: #7d9dd6; }
  .face { position: absolute; right: 8px; top: 668px; }
  share-bar { position: absolute; left: 50%; bottom: 9px; transform: translateX(-50%); }
  camera-bubble { position: absolute; right: 404px; bottom: 8px; }
  recorder-controls { position: absolute; right: 78px; bottom: 13px; }
  .cursor { position: absolute; left: 59%; top: 330px; }
`, `
  <project-header></project-header>
  <div class="split">
    <chat-panel></chat-panel>
    <app-preview></app-preview>
  </div>
  <publish-panel></publish-panel>
  <ui-icon class="face" name="facePale" size="24"></ui-icon>
  <div class="layer"><settings-dialog role="dialog" aria-label="Settings"></settings-dialog></div>
  <button class="edge" aria-label="Open side panel"><ui-icon name="chevronLeft" size="14" weight="3"></ui-icon></button>
  <share-bar></share-bar>
  <camera-bubble></camera-bubble>
  <recorder-controls></recorder-controls>
  <ui-icon class="cursor" name="pointer" size="18"></ui-icon>
`);
</script>
</body>
</html>
